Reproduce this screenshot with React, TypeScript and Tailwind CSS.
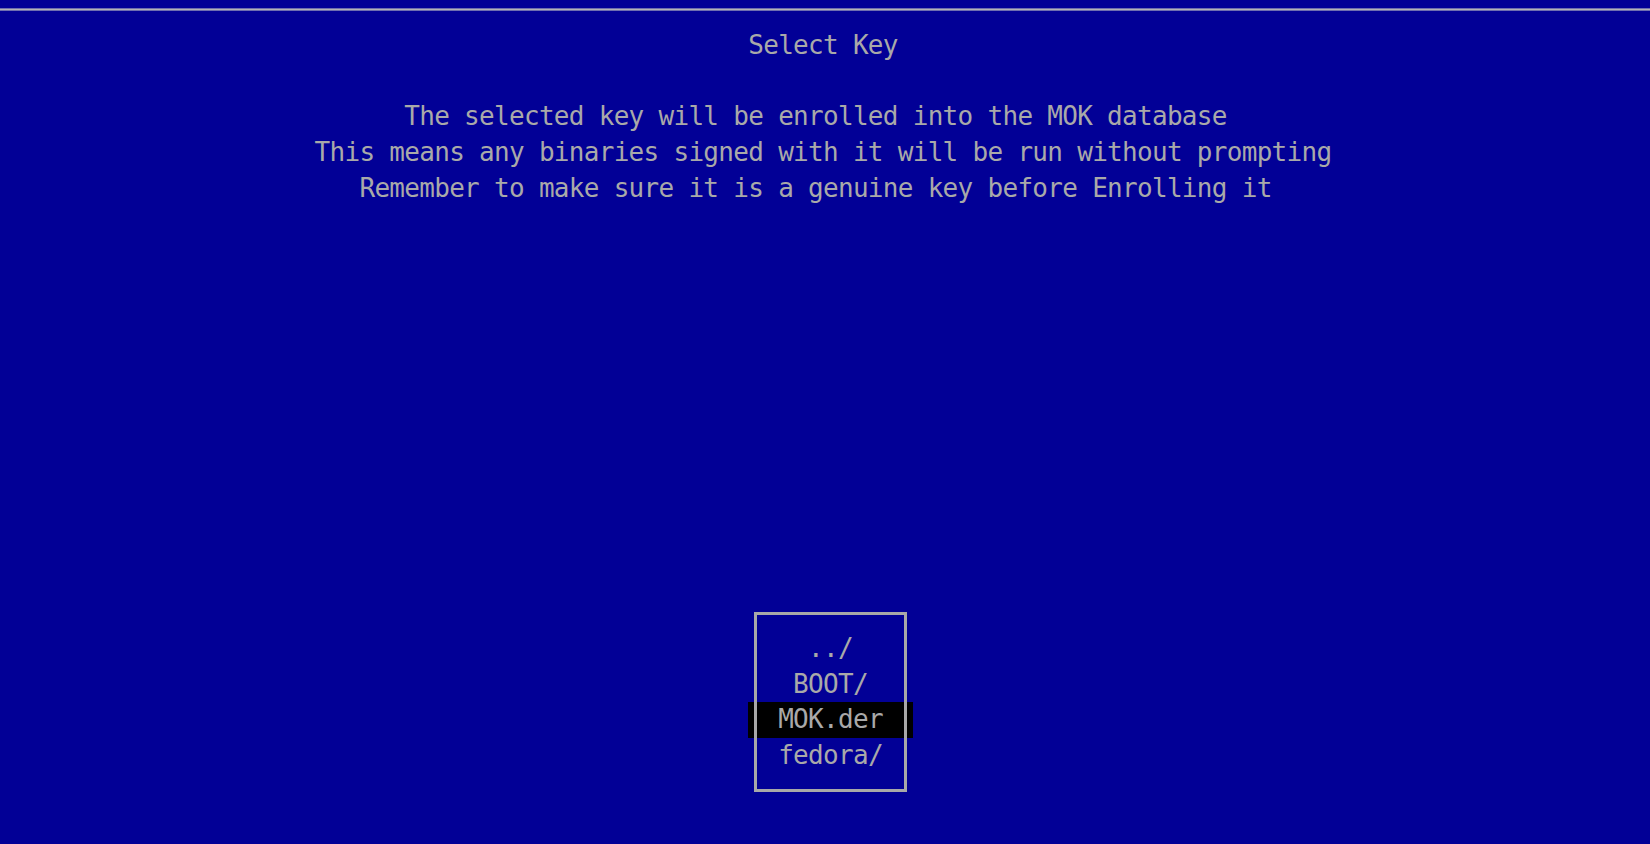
import React from "react";

const font = {
  fontFamily: '"DejaVu Sans Mono", "Liberation Mono", monospace',
};

export default function App() {
  const lines = [
    "The selected key will be enrolled into the MOK database ",
    "This means any binaries signed with it will be run without prompting",
    "Remember to make sure it is a genuine key before Enrolling it ",
  ];
  const items = ["../", "BOOT/", "MOK.der", "fedora/"];
  return (
    <div
      className="w-full h-[844px] bg-[#020096] text-[#a9a9a9] text-[26px] tracking-[-0.7px] flex flex-col overflow-hidden"
      style={font}
    >
      <div className="mt-[8px] h-[3px] border-y border-[#6f6fb0] bg-[#b4b4b4]" />
      <div className="pr-[4px] flex flex-col">
        <div className="mt-[16px] h-[36px] leading-[36px] text-center whitespace-pre">
          Select Key
        </div>
        <div className="mt-[35px] flex flex-col">
          {lines.map((l) => (
            <div key={l} className="h-[36px] leading-[36px] text-center whitespace-pre">
              {l}
            </div>
          ))}
        </div>
      </div>
      <div className="mt-[406px] flex justify-center pl-[11px]">
        <div className="relative w-[153px] pt-[19px] pb-[19px]">
          {items.map((it) => (
            <div
              key={it}
              className={
                "mx-[-6px] h-[35.5px] leading-[35.5px] text-center whitespace-pre " +
                (it === "MOK.der" ? "bg-black" : "")
              }
            >
              {it}
            </div>
          ))}
          <div className="absolute inset-0 border-[3px] border-[#a8a8a8] pointer-events-none" />
        </div>
      </div>
    </div>
  );
}
